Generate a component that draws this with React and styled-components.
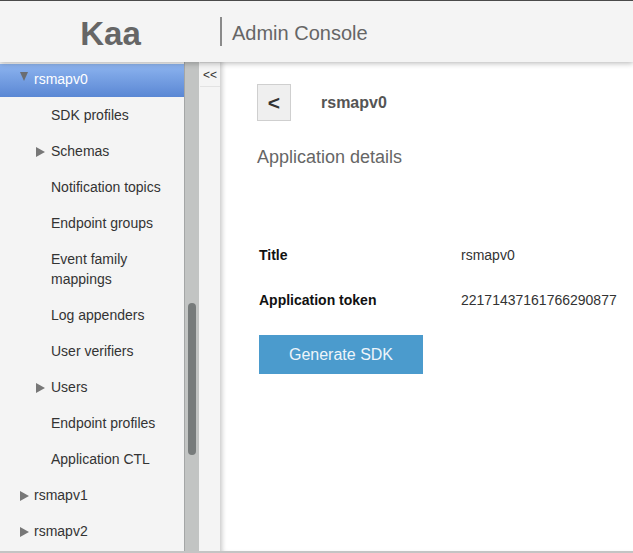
import React from 'react';
import styled, { createGlobalStyle } from 'styled-components';

const GlobalStyle = createGlobalStyle`
    html, body {
        margin: 0;
        padding: 0;
        background: #fff;
        font-family: "Liberation Sans", Arial, sans-serif;
    }
`;

const tree = [
    { label: 'rsmapv0', level: 0, arrow: 'down', selected: true },
    { label: 'SDK profiles', level: 1 },
    { label: 'Schemas', level: 1, arrow: 'right' },
    { label: 'Notification topics', level: 1 },
    { label: 'Endpoint groups', level: 1 },
    { label: 'Event family mappings', level: 1 },
    { label: 'Log appenders', level: 1 },
    { label: 'User verifiers', level: 1 },
    { label: 'Users', level: 1, arrow: 'right' },
    { label: 'Endpoint profiles', level: 1 },
    { label: 'Application CTL', level: 1 },
    { label: 'rsmapv1', level: 0, arrow: 'right' },
    { label: 'rsmapv2', level: 0, arrow: 'right' },
];

export default function App() {
    return (
        <Page>
            <GlobalStyle />
            <Header>
                <Logo>Kaa</Logo>
                <Divider />
                <ConsoleTitle>Admin Console</ConsoleTitle>
            </Header>
            <Body>
                <Tree>
                    {tree.map(item => (
                        <Row key={item.label} level={item.level} selected={item.selected}>
                            <ArrowSlot level={item.level}>
                                {item.arrow && <Arrow dir={item.arrow} />}
                            </ArrowSlot>
                            <RowText>{item.label}</RowText>
                        </Row>
                    ))}
                </Tree>
                <Track>
                    <Thumb />
                </Track>
                <Gutter>
                    <CollapseButton>&lt;&lt;</CollapseButton>
                </Gutter>
                <Main>
                    <TitleBar>
                        <BackButton>&lt;</BackButton>
                        <AppName>rsmapv0</AppName>
                    </TitleBar>
                    <SectionTitle>Application details</SectionTitle>
                    <Details>
                        <Field>
                            <Label>Title</Label>
                            <Value>rsmapv0</Value>
                        </Field>
                        <Field>
                            <Label>Application token</Label>
                            <Value>22171437161766290877</Value>
                        </Field>
                    </Details>
                    <GenerateButton>Generate SDK</GenerateButton>
                </Main>
            </Body>
        </Page>
    );
}

const Page = styled.div`
    width: 633px;
    height: 553px;
    display: flex;
    flex-direction: column;
    overflow: hidden;
`;

const Header = styled.div`
    position: relative;
    z-index: 2;
    height: 61px;
    flex: none;
    display: flex;
    align-items: center;
    background: #f4f4f4;
    border-top: 1px solid #4a4a4a;
    box-shadow: 0 2px 5px rgba(0, 0, 0, 0.22);
`;

const Logo = styled.div`
    width: 221px;
    text-align: center;
    font-size: 33px;
    font-weight: bold;
    color: #666;
    padding-top: 4px;
`;

const Divider = styled.div`
    width: 2px;
    height: 29px;
    background: #8a8a8a;
    margin-left: -1px;
`;

const ConsoleTitle = styled.div`
    margin-left: 10px;
    font-size: 20px;
    color: #666;
    padding-top: 3px;
`;

const Body = styled.div`
    flex: 1;
    display: flex;
    min-height: 0;
    border-bottom: 2px solid #c4c4c4;
`;

const Tree = styled.div`
    width: 184px;
    flex: none;
    background: #f4f4f4;
    overflow: hidden;
`;

const Row = styled.div`
    display: flex;
    align-items: flex-start;
    padding: ${p => (p.selected ? '0' : '8px')} 0 ${p => (p.selected ? '0' : '8px')} ${p => (p.level ? 36 : 20)}px;
    margin: ${p => (p.selected ? '2px 0 0' : '0')};
    height: ${p => (p.selected ? '33px' : 'auto')};
    line-height: ${p => (p.selected ? '30px' : '20px')};
    font-size: 14px;
    color: ${p => (p.selected ? '#fff' : '#333')};
    background: ${p => (p.selected ? 'linear-gradient(#8db4ef, #5a87d4)' : 'transparent')};
    box-sizing: border-box;
`;

const ArrowSlot = styled.div`
    width: ${p => (p.level ? 15 : 14)}px;
    flex: none;
    height: 20px;
    display: flex;
    align-items: center;
    padding-top: 1px;
    box-sizing: border-box;
`;

const Arrow = styled.div`
    width: 0;
    height: 0;
    ${p => p.dir === 'down'
        ? `border-top: 9px solid #6a6d72;
           border-left: 4.5px solid transparent;
           border-right: 4.5px solid transparent;
           margin-top: 4px;`
        : `border-left: 9px solid #777;
           border-top: 5px solid transparent;
           border-bottom: 5px solid transparent;`}
`;

const RowText = styled.div`
    flex: 1;
`;

const Track = styled.div`
    width: 15px;
    flex: none;
    background: #c2c4c3;
    border-left: 1px solid #a4a6a6;
    padding: 241px 0 0 3px;
    box-sizing: border-box;
`;

const Thumb = styled.div`
    width: 8px;
    height: 152px;
    border-radius: 4px;
    background: #777b7b;
`;

const Gutter = styled.div`
    width: 21px;
    flex: none;
    background: #f4f4f4;
    padding-left: 1px;
    box-sizing: border-box;
`;

const CollapseButton = styled.div`
    height: 25px;
    line-height: 24px;
    text-align: center;
    font-size: 12px;
    color: #333;
    border-top: 1px solid #e2e2e2;
    border-bottom: 1px solid #e2e2e2;
    box-sizing: border-box;
`;

const Main = styled.div`
    flex: 1;
    background: #fff;
    padding: 22px 0 0 37px;
    box-shadow: inset 5px 0 5px -3px rgba(0, 0, 0, 0.22);
`;

const TitleBar = styled.div`
    display: flex;
    align-items: center;
`;

const BackButton = styled.div`
    width: 32px;
    height: 35px;
    display: flex;
    align-items: center;
    justify-content: center;
    background: #efefef;
    border: 1px solid #cfcfcf;
    font-size: 21px;
    font-weight: bold;
    color: #333;
`;

const AppName = styled.div`
    margin-left: 30px;
    font-size: 16px;
    font-weight: bold;
    color: #555;
`;

const SectionTitle = styled.div`
    margin-top: 26px;
    font-size: 18px;
    color: #666;
`;

const Details = styled.div`
    margin-top: 79px;
    padding-left: 2px;
    display: flex;
    flex-direction: column;
    gap: 29px;
`;

const Field = styled.div`
    display: flex;
    font-size: 14px;
    line-height: 16px;
`;

const Label = styled.div`
    width: 202px;
    font-weight: bold;
    color: #111;
`;

const Value = styled.div`
    color: #333;
`;

const GenerateButton = styled.div`
    margin: 27px 0 0 2px;
    width: 164px;
    height: 39px;
    display: flex;
    align-items: center;
    justify-content: center;
    background: #4b9bcd;
    color: #eef5fa;
    font-size: 16px;
`;
